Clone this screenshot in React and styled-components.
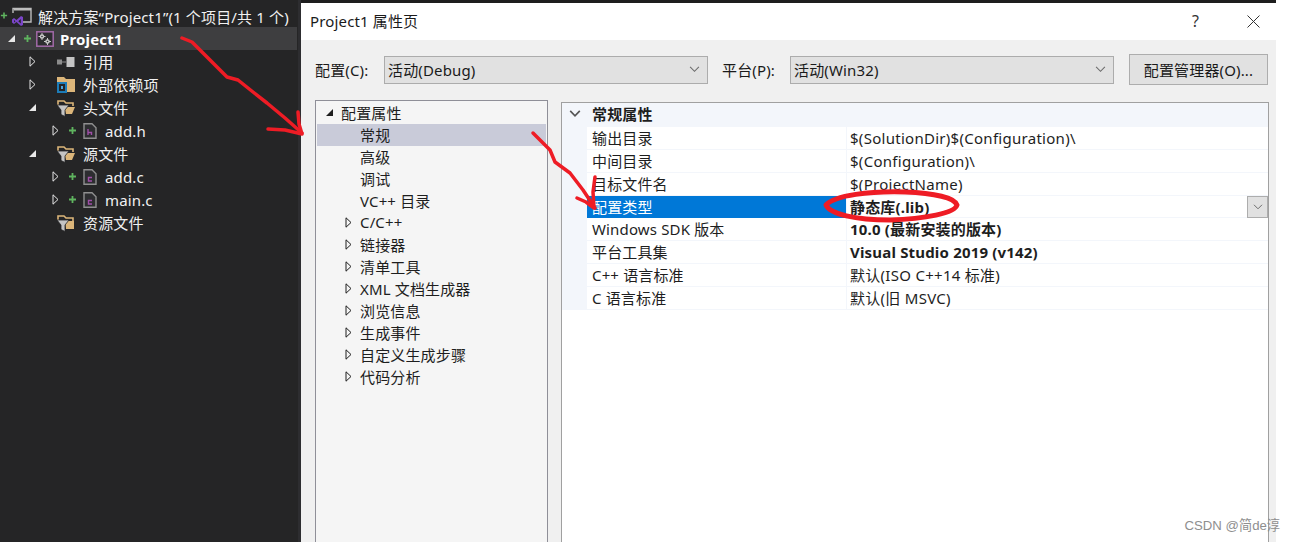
import styled, { createGlobalStyle } from 'styled-components';

const GlobalStyle = createGlobalStyle`
  html, body {
    margin: 0;
    padding: 0;
    background: #fff;
    overflow: hidden;
  }
  * {
    box-sizing: border-box;
  }
`;

const Page = styled.div`
  position: relative;
  display: flex;
  width: 1295px;
  height: 542px;
  overflow: hidden;
  background: #fff;
  font-family: "Noto Sans", "Noto Sans CJK SC", sans-serif;
  font-size: 15px;
  letter-spacing: 0.15px;
`;

// Solution explorer
const Sidebar = styled.aside`
  width: 301px;
  flex: none;
  padding: 4px 1px 0 0;
  background: #252526;
  color: #f1f1f1;
  border-right: 3px solid #2d2d30;
`;

const TreeRow = styled.div`
  display: flex;
  align-items: center;
  height: 23px;
  padding-left: ${(p) => p.$indent}px;
  background: ${(p) => (p.$active ? '#3e3e40' : 'transparent')};
  font-weight: ${(p) => (p.$active ? 700 : 400)};
  color: ${(p) => (p.$active ? '#fff' : '#f1f1f1')};
  white-space: nowrap;
`;

const Slot = styled.span`
  display: flex;
  align-items: center;
  justify-content: center;
  flex: none;
  width: ${(p) => p.$w}px;
  height: 100%;
  margin-left: ${(p) => p.$lead || 0}px;
`;

const TreeLabel = styled.span`
  margin-left: ${(p) => p.$gap}px;
  padding-top: ${(p) => (p.$flush ? 0 : 1)}px;
`;

// Dialog
const Dialog = styled.main`
  display: flex;
  flex-direction: column;
  width: 975px;
  flex: none;
  border-top: 3px solid #1e1e1e;
  background: #f0f0f0;
`;

const TitleBar = styled.header`
  display: flex;
  align-items: center;
  height: 37px;
  padding-left: 9px;
  background: #fff;
  color: #1a1a1a;
`;

const Title = styled.div`
  flex: 1;
  padding-bottom: 2px;
`;

const TitleQuestion = styled.span`
  width: 55px;
  font-size: 16px;
  color: #333;
  padding-bottom: 2px;
`;

const CloseBtn = styled.span`
  display: flex;
  width: 29px;
`;

const ConfigBar = styled.div`
  display: flex;
  align-items: center;
  height: 59px;
  padding: 0 8px 0 14px;
  color: #1a1a1a;
`;

const ConfigLabel = styled.label`
  width: ${(p) => p.$w}px;
  flex: none;
`;

const Select = styled.div`
  display: flex;
  align-items: center;
  justify-content: space-between;
  width: 324px;
  height: 28px;
  flex: none;
  margin-right: 14px;
  padding: 0 7px 0 3px;
  background: #e1e1e1;
  border: 1px solid #acacac;
`;

const ManagerButton = styled.button`
  width: 139px;
  height: 31px;
  margin-left: 1px;
  padding: 0;
  background: #e1e1e1;
  border: 1px solid #adadad;
  color: #1a1a1a;
  font: inherit;
  letter-spacing: inherit;
`;

const Panels = styled.div`
  display: flex;
  flex: 1;
  min-height: 0;
  padding: 1px 7px 0 14px;
`;

const NavPanel = styled.nav`
  width: 233px;
  flex: none;
  padding: 1px 1px 0;
  margin-right: 13px;
  background: #f5f5f5;
  border: 1px solid #8f8f98;
  border-bottom: none;
  color: #1e1e1e;
`;

const NavRow = styled.div`
  display: flex;
  align-items: center;
  height: 22px;
  padding-left: ${(p) => p.$indent}px;
  padding-bottom: 2px;
  background: ${(p) => (p.$selected ? '#c9cbd9' : 'transparent')};
`;

const NavCaret = styled.span`
  display: flex;
  width: ${(p) => p.$w}px;
  flex: none;
`;

const GridPanel = styled.section`
  flex: 1;
  margin-top: 2px;
  background: #fff;
  border: 1px solid #a0a0a0;
  border-bottom: none;
  color: #1e1e1e;
`;

const GroupHeader = styled.div`
  display: flex;
  align-items: center;
  height: 24px;
  padding-bottom: 3px;
  background: #f3f6fb;
  font-weight: 700;
`;

const Gutter = styled.span`
  display: flex;
  align-items: center;
  justify-content: center;
  width: 25px;
  margin-right: 5px;
  flex: none;
`;

const PropRows = styled.div`
  border-left: 25px solid #f3f6fb;
`;

const PropRow = styled.div`
  position: relative;
  display: grid;
  grid-template-columns: 260px 1fr;
  height: ${(p) => (p.$selected ? 22 : 23)}px;
  border-bottom: 1px solid #f3f6fb;
  line-height: 22px;
`;

const PropName = styled.div`
  padding-left: 5px;
  border-right: 1px solid #f3f6fb;
  background: ${(p) => (p.$selected ? '#0078d7' : 'transparent')};
  color: ${(p) => (p.$selected ? '#fff' : 'inherit')};
`;

const PropValue = styled.div`
  padding-left: 3px;
  font-weight: ${(p) => (p.$bold ? 700 : 400)};
  letter-spacing: ${(p) => (p.$bold ? 0.18 : 0.28)}px;
`;

const DropButton = styled.span`
  position: absolute;
  right: 0;
  top: 0;
  display: flex;
  align-items: center;
  justify-content: center;
  width: 21px;
  height: 22px;
  background: #e1e1e1;
  border: 1px solid #adadad;
`;

const Scribbles = styled.svg`
  position: absolute;
  inset: 0;
  pointer-events: none;
`;

const Watermark = styled.div`
  position: absolute;
  right: 15px;
  bottom: 7px;
  color: #8e8e8e;
  font-family: "Liberation Sans", "Noto Sans CJK SC", sans-serif;
  font-size: 13.2px;
  letter-spacing: 0;
  line-height: 18px;
`;

// Small drawings
const Expand = ({ open, light }) => {
  const c = light ? '#e8e8e8' : '#1e1e1e';
  if (open) {
    return (
      <svg width="9" height="9" viewBox="0 0 9 9">
        <path d="M8 1v7H1z" fill={c} />
      </svg>
    );
  }
  return (
    <svg width="7" height="11" viewBox="0 0 7 11">
      <path d="M1 .8v9.4l5-4.700z" fill="none" stroke={c} />
    </svg>
  );
};

const Plus = () => (
  <svg width="9" height="9" viewBox="0 0 9 9">
    <path d="M4.500 1v7M1 4.500h7" stroke="#5fb45f" strokeWidth="1.800" />
  </svg>
);

const Chevron = ({ size = 11, color = '#6d6d6d', weight = 1 }) => (
  <svg width={size} height={size * 0.6} viewBox="0 0 10 6">
    <path d="M1 .8l4 4 4-4" fill="none" stroke={color} strokeWidth={weight} />
  </svg>
);

const SolutionIcon = () => (
  <svg width="20" height="20" viewBox="0 0 20 20">
    <path d="M1 7V2.500h18V16H11" fill="none" stroke="#bdbdbd" strokeWidth="1.400" />
    <path d="M2 2h17v2.500H2z" fill="#bdbdbd" />
    <path d="M0 13.500l2-1.500 2.500 2 4.500-4 2 1v8l-2 1-4.500-4-2.500 2-2-1.500zM2 14v2.500l1.400-1.200zM8.800 13l-2.500 2.300 2.500 2.200z" fill="#7a45c8" fillRule="evenodd" />
  </svg>
);

const ProjectIcon = () => (
  <svg width="18" height="16" viewBox="0 0 18 16">
    <rect x=".8" y=".8" width="16.400" height="14.400" fill="#2d2d30" stroke="#a26aa8" strokeWidth="1.500" />
    <circle cx="6" cy="5.500" r="2.300" fill="#c8c8c8" />
    <circle cx="11.500" cy="10.500" r="2.300" fill="#c8c8c8" />
    <path d="M6 2v7M2.500 5.500h7M11.500 7v7M8 10.500h7" stroke="#c8c8c8" />
    <circle cx="6" cy="5.500" r=".8" fill="#2d2d30" />
    <circle cx="11.500" cy="10.500" r=".8" fill="#2d2d30" />
  </svg>
);

const RefIcon = () => (
  <svg width="18" height="10" viewBox="0 0 18 10">
    <path d="M0 2.500h5v5H0z" fill="#8c8c8c" />
    <path d="M5 4.500h4v1H5z" fill="#8c8c8c" />
    <path d="M9.500 0h8v10h-8z" fill="#c4c4c4" />
  </svg>
);

const ExtIcon = () => (
  <svg width="18" height="18" viewBox="0 0 18 18">
    <path d="M0 1h7l2 2h9v13H10V6H0z" fill="#dcb67a" />
    <path d="M0 6h10v11H0z" fill="#1c7cb8" />
    <path d="M2 8h6v7H2z" fill="#252526" />
    <path d="M4 10h2v3H4z" fill="#4ea6dc" />
  </svg>
);

const FilterFolder = ({ open }) => (
  <svg width="18" height="18" viewBox="0 0 18 18">
    <path d="M1 6V2h6l2 2h7v3" fill="none" stroke="#dcb67a" strokeWidth="1.600" />
    <path d={open ? 'M7 8h11l-3 7H9z' : 'M8 7h9v8H9z'} fill="#dcb67a" />
    <path d="M0 6h12L8 11v6.500l-4-2V11z" fill="#c4c4c4" stroke="#252526" strokeWidth=".8" />
  </svg>
);

const FileIcon = ({ letter }) => (
  <svg width="14" height="16" viewBox="0 0 14 16">
    <path d="M1 .8h8l4 4v10.400H1z" fill="#2d2d30" stroke="#8f8f8f" strokeWidth="1.400" />
    {letter === 'h' ? (
      <path d="M5 6v6M5 9.500h3.500V12" fill="none" stroke="#a04fa8" strokeWidth="1.400" />
    ) : (
      <path d="M9 8.500H5.500V12H9" fill="none" stroke="#a04fa8" strokeWidth="1.400" />
    )}
  </svg>
);

const FolderRow = ({ expand, icon, children }) => (
  <TreeRow $indent={27}>
    <Slot $w={11}>
      {expand !== undefined && <Expand open={expand} light />}
    </Slot>
    <Slot $w={22} $lead={17}>{icon}</Slot>
    <TreeLabel $gap={6} $flush>{children}</TreeLabel>
  </TreeRow>
);

const FileRow = ({ letter, children }) => (
  <TreeRow $indent={50}>
    <Slot $w={11}><Expand light /></Slot>
    <Slot $w={14} $lead={4}><Plus /></Slot>
    <Slot $w={22}><FileIcon letter={letter} /></Slot>
    <TreeLabel $gap={4}>{children}</TreeLabel>
  </TreeRow>
);

const navItems = [
  { label: '常规', selected: true },
  { label: '高级' },
  { label: '调试' },
  { label: 'VC++ 目录' },
  { label: 'C/C++', more: true },
  { label: '链接器', more: true },
  { label: '清单工具', more: true },
  { label: 'XML 文档生成器', more: true },
  { label: '浏览信息', more: true },
  { label: '生成事件', more: true },
  { label: '自定义生成步骤', more: true },
  { label: '代码分析', more: true },
];

const props = [
  { name: '输出目录', value: '$(SolutionDir)$(Configuration)\\' },
  { name: '中间目录', value: '$(Configuration)\\' },
  { name: '目标文件名', value: '$(ProjectName)' },
  { name: '配置类型', value: '静态库(.lib)', bold: true, selected: true },
  { name: 'Windows SDK 版本', value: '10.0 (最新安装的版本)', bold: true },
  { name: '平台工具集', value: 'Visual Studio 2019 (v142)', bold: true },
  { name: 'C++ 语言标准', value: '默认(ISO C++14 标准)' },
  { name: 'C 语言标准', value: '默认(旧 MSVC)' },
];

const App = () => {
  return (
    <Page>
      <GlobalStyle />
      <Sidebar>
        <TreeRow $indent={0}>
          <Slot $w={8}><Plus /></Slot>
          <Slot $w={22} $lead={3}><SolutionIcon /></Slot>
          <TreeLabel $gap={5}>解决方案“Project1”(1 个项目/共 1 个)</TreeLabel>
        </TreeRow>
        <TreeRow $indent={6} $active>
          <Slot $w={11}><Expand open light /></Slot>
          <Slot $w={14} $lead={3}><Plus /></Slot>
          <Slot $w={22}><ProjectIcon /></Slot>
          <TreeLabel $gap={4}>Project1</TreeLabel>
        </TreeRow>
        <FolderRow expand={false} icon={<RefIcon />}>引用</FolderRow>
        <FolderRow expand={false} icon={<ExtIcon />}>外部依赖项</FolderRow>
        <FolderRow expand icon={<FilterFolder open />}>头文件</FolderRow>
        <FileRow letter="h">add.h</FileRow>
        <FolderRow expand icon={<FilterFolder open />}>源文件</FolderRow>
        <FileRow letter="c">add.c</FileRow>
        <FileRow letter="c">main.c</FileRow>
        <FolderRow icon={<FilterFolder />}>资源文件</FolderRow>
      </Sidebar>

      <Dialog>
        <TitleBar>
          <Title>Project1 属性页</Title>
          <TitleQuestion>?</TitleQuestion>
          <CloseBtn>
            <svg width="13" height="13" viewBox="0 0 13 13">
              <path d="M.5.500l12 12M12.500.500l-12 12" stroke="#333" />
            </svg>
          </CloseBtn>
        </TitleBar>

        <ConfigBar>
          <ConfigLabel $w={69}>配置(C):</ConfigLabel>
          <Select>
            活动(Debug)
            <Chevron />
          </Select>
          <ConfigLabel $w={68}>平台(P):</ConfigLabel>
          <Select>
            活动(Win32)
            <Chevron />
          </Select>
          <ManagerButton>配置管理器(O)...</ManagerButton>
        </ConfigBar>

        <Panels>
          <NavPanel>
            <NavRow $indent={8}>
              <NavCaret $w={16}><Expand open /></NavCaret>
              配置属性
            </NavRow>
            {navItems.map((item) => (
              <NavRow key={item.label} $indent={item.more ? 28 : 43} $selected={item.selected}>
                {item.more && (
                  <NavCaret $w={15}><Expand /></NavCaret>
                )}
                {item.label}
              </NavRow>
            ))}
          </NavPanel>

          <GridPanel>
            <GroupHeader>
              <Gutter><Chevron size={12} color="#555" weight={1.4} /></Gutter>
              常规属性
            </GroupHeader>
            <PropRows>
              {props.map((row) => (
                <PropRow key={row.name} $selected={row.selected}>
                  <PropName $selected={row.selected}>{row.name}</PropName>
                  <PropValue $bold={row.bold}>{row.value}</PropValue>
                  {row.selected && (
                    <DropButton><Chevron size={10} /></DropButton>
                  )}
                </PropRow>
              ))}
            </PropRows>
          </GridPanel>
        </Panels>
      </Dialog>

      <Scribbles width="1295" height="542" viewBox="0 0 1295 542" fill="none" stroke="#ee1c25" strokeWidth="3.5" strokeLinecap="round" strokeLinejoin="round">
        <path d="M182 38l10 4 8 8 14 14 13 13 11 3 15 12 14 11 18 15 17 15" />
        <path d="M298 112l1 12 3 10-17-4-17-1" />
        <path d="M533 133l7 7 10 10 5 12 15 11 13 17 12 18" />
        <path d="M595 177l-2 15 1 16-8-6-9-4" />
        <path strokeWidth="5" d="M826 205c9-10 44-14 79-13 30 1 50 6 52 13-2 8-32 14-67 15-35 0-60-6-64-15z" />
      </Scribbles>
      <Watermark>CSDN @简de淳</Watermark>
    </Page>
  );
};

export default App;
